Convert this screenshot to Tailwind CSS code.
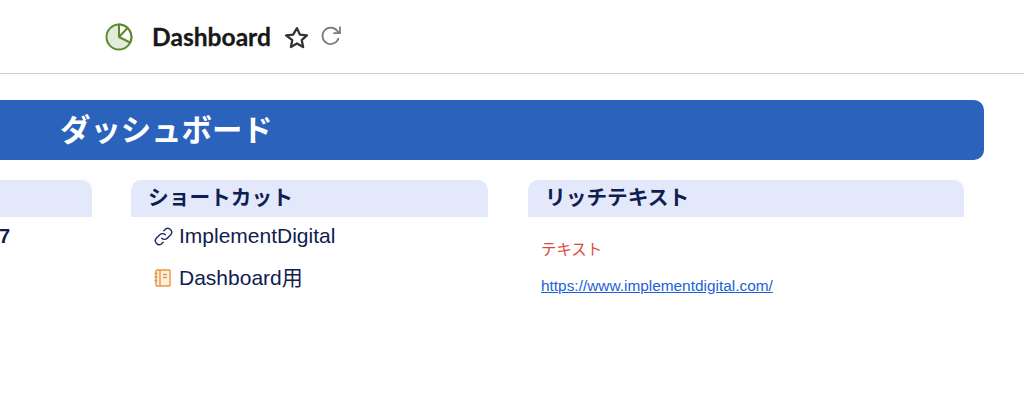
<!DOCTYPE html>
<html lang="ja">
<head>
<meta charset="UTF-8">
<title>Dashboard</title>
<script src="https://cdn.jsdelivr.net/npm/@tailwindcss/browser@4"></script>
</head>
<body class="h-[410px] w-[1024px] overflow-hidden bg-white font-['Liberation_Sans','Noto_Sans_CJK_JP',sans-serif]">

<!-- Top bar -->
<header class="flex h-[74px] items-center border-b border-[#cfcfcf] pl-[105px] pt-[2px]">
  <svg class="mb-[2px] h-[28px] w-[28px]" viewBox="0 0 28 28" fill="none">
    <circle cx="14" cy="14" r="12.5" fill="#e3ebda" stroke="#5b8a2f" stroke-width="2"/>
    <path d="M14 14V1.5A12.5 12.5 0 0 1 25 19.5Z" fill="#fff" stroke="#5b8a2f" stroke-width="2" stroke-linejoin="round"/>
    <path d="M14 14l8.5-9" stroke="#5b8a2f" stroke-width="2"/>
  </svg>
  <h1 class="ml-[19px] font-['Lato','Noto_Sans',sans-serif] text-[24.6px] font-bold leading-none text-[#181818] [-webkit-text-stroke:0.3px_#181818]">Dashboard</h1>
  <svg class="ml-[14px] h-[24px] w-[24px]" viewBox="0 0 24 24" fill="none">
    <path d="M12 2.2l2.9 6.4 7 .8-5.2 4.7 1.4 6.9-6.1-3.5-6.1 3.5 1.4-6.9L1.1 9.4l7-.8z" stroke="#333" stroke-width="2.3" stroke-linejoin="round"/>
  </svg>
  <svg class="ml-[11px] mb-[3px] h-[22px] w-[22px]" viewBox="0 0 22 22" fill="none">
    <path d="M18.6 13a8.2 8.2 0 1 1-1.6-7.4l2 2.2" stroke="#777" stroke-width="1.7"/>
    <path d="M20 1.6v6.6h-6.6" stroke="#777" stroke-width="1.7"/>
  </svg>
</header>

<main class="pt-[26px]">
  <!-- Banner -->
  <div class="ml-[-20px] flex h-[60px] w-[1004px] items-center rounded-[10px] bg-[#2a62bc] pl-[80px]">
    <h2 class="text-[30.4px] font-bold leading-none text-white">ダッシュボード</h2>
  </div>

  <!-- Cards -->
  <div class="ml-[-265px] mt-[20px] flex">
    <section class="w-[357px]">
      <div class="h-[37px] rounded-t-[10px] bg-[#e3e8fb]"></div>
      <p class="pl-[264px] pt-[8px] text-[20px] font-bold leading-[22px] text-[#0f2050]">7</p>
    </section>

    <section class="ml-[39px] w-[357px]">
      <h3 class="flex h-[37px] items-center rounded-t-[10px] bg-[#e3e8fb] pl-[17px] text-[20.7px] font-bold leading-none text-[#0f2050]">ショートカット</h3>
      <ul class="pl-[23px] text-[21px] leading-[24px] text-[#0f2050]">
        <li class="mt-[7px] flex items-center">
          <svg class="h-[19px] w-[19px]" viewBox="1.5 1.5 15 15" fill="none" stroke="#1a2b5c" stroke-width="1.1" stroke-linecap="round">
            <path d="M7.6 10.4a3 3 0 0 0 4.3 0l3-3a3.1 3.1 0 0 0-4.3-4.3L9.3 4.4"/>
            <path d="M10.4 7.6a3 3 0 0 0-4.3 0l-3 3a3.1 3.1 0 0 0 4.3 4.3l1.3-1.3"/>
          </svg>
          <span class="ml-[6px]">ImplementDigital</span>
        </li>
        <li class="mt-[18px] flex items-center">
          <svg class="h-[18px] w-[18px]" viewBox="0 0 18 18" fill="none" stroke="#e8973f" stroke-width="1.4">
            <rect x="2" y="1" width="14" height="16" rx="1" fill="#fdf0e0"/>
            <path d="M6 1v16M9 5.5h4M9 8.5h4M.5 4.5h3M.5 8h3M.5 11.5h3"/>
          </svg>
          <span class="ml-[7px]">Dashboard用</span>
        </li>
      </ul>
    </section>

    <section class="ml-[40px] w-[436px]">
      <h3 class="flex h-[37px] items-center rounded-t-[10px] bg-[#e3e8fb] pl-[17px] text-[20.7px] font-bold leading-none text-[#0f2050]">リッチテキスト</h3>
      <div class="pl-[13px] text-[15.4px] leading-[20px]">
        <p class="mt-[23px] text-[#e0473c]">テキスト</p>
        <a href="#" class="mt-[16px] block text-[#1d5fd8] underline">https://www.implementdigital.com/</a>
      </div>
    </section>
  </div>
</main>
</body>
</html>
